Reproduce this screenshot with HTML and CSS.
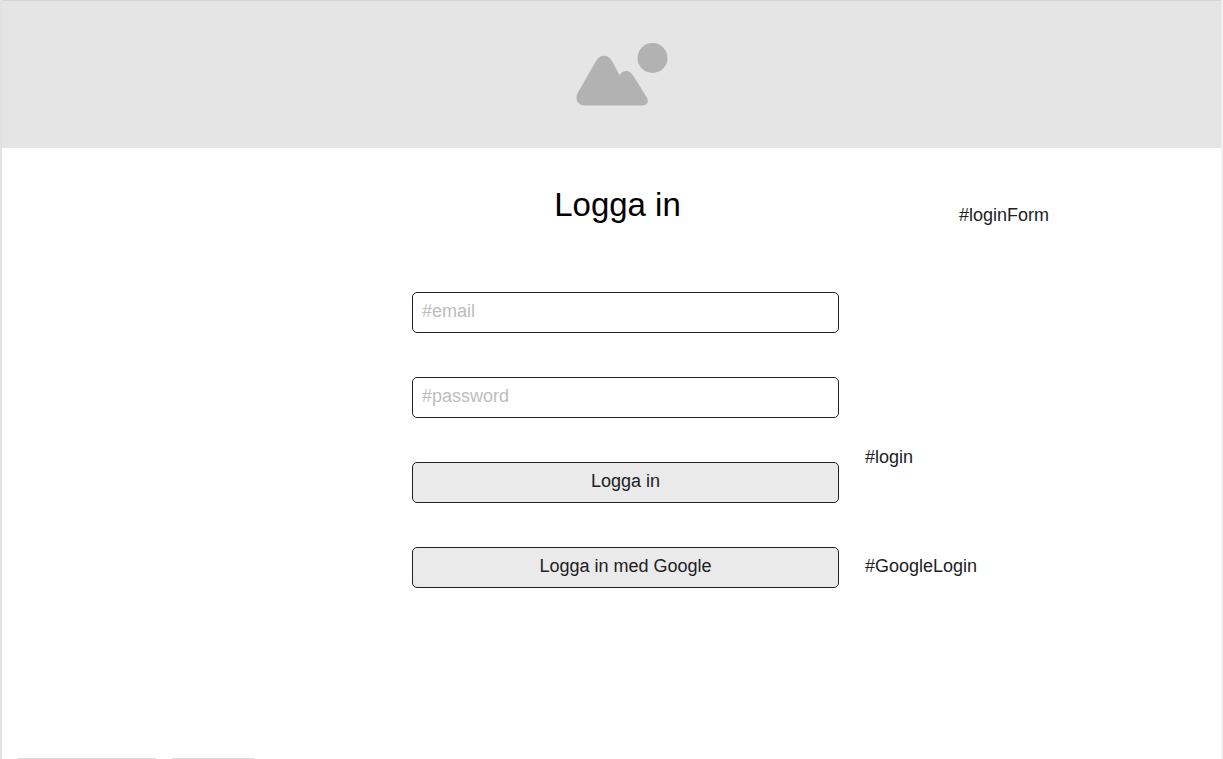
FILE: index.html
```html
<!DOCTYPE html>
<html lang="sv">
<head>
<meta charset="utf-8">
<meta name="viewport" content="width=device-width, initial-scale=1">
<title>Logga in</title>
<link rel="stylesheet" href="styles.css">
</head>
<body>
<div class="page">
  <header class="banner">
    <svg class="banner-image" viewBox="0 0 92 64" width="92" height="64" aria-hidden="true">
      <path d="M20 18C24 11 32 11 36 18L43.500 32C47.500 26.500 53.500 26.500 57.500 33L70.500 54C73.500 59 71 62.500 66 62.500H9.500C1 62.500-1.500 56 2 49.500Z"/>
      <circle cx="76.500" cy="15" r="15"/>
    </svg>
  </header>
  <main class="login">
    <h1 class="title">Logga in</h1>
    <p class="note note-form">#loginForm</p>
    <form class="form" id="loginForm">
      <input class="field" id="email" type="email" placeholder="#email" aria-label="#email">
      <input class="field" id="password" type="password" placeholder="#password" aria-label="#password">
      <button class="button" id="login" type="submit">Logga in</button>
      <button class="button" id="GoogleLogin" type="button">Logga in med Google</button>
    </form>
    <div class="notes">
      <p class="note">#login</p>
      <p class="note">#GoogleLogin</p>
    </div>
  </main>
  <footer class="tabs">
    <span class="tab tab-wide"></span>
    <span class="tab"></span>
  </footer>
</div>
</body>
</html>
```
FILE: styles.css
```css
* {
  box-sizing: border-box;
}

body {
  margin: 0;
  background: #fff;
  color: #202124;
  font: 18px/24px "Liberation Sans", Arial, sans-serif;
}

.page {
  display: flex;
  flex-direction: column;
  min-height: 100vh;
  border-left: 2px solid #e2e2e2;
  border-right: 2px solid #f0f0f0;
}

.banner {
  display: flex;
  justify-content: center;
  padding: 42px 0 41px 20px;
  border-top: 1px solid #d4d4d4;
  background: #e5e5e5;
}

.banner-image {
  fill: #b2b2b2;
}

.login {
  display: grid;
  grid-template-columns: 410fr 427fr 382fr;
  flex: 1;
  align-content: start;
  row-gap: 65px;
  padding-top: 35px;
}

.title {
  grid-column: 2;
  margin: 0;
  padding-right: 16px;
  color: #000;
  font-size: 33px;
  font-weight: 400;
  line-height: 44px;
  text-align: center;
}

.note {
  margin: 0;
}

.note-form {
  align-self: end;
  padding-left: 120px;
}

.form {
  display: grid;
  grid-column: 2;
  gap: 44px;
}

.field,
.button {
  width: 100%;
  height: 41px;
  margin: 0;
  padding: 0 9px 3px;
  border: 1px solid #202124;
  border-radius: 5px;
  background: #fff;
  color: inherit;
  font: inherit;
}

.field::placeholder {
  color: #bdbdbd;
  opacity: 1;
}

.button {
  background: #eaeaea;
}

.notes {
  display: flex;
  flex-direction: column;
  gap: 85px;
  align-self: end;
  padding: 0 0 10px 26px;
}

.tabs {
  display: flex;
  gap: 16px;
  padding-left: 16px;
}

.tab {
  width: 82px;
  height: 1px;
  background: #dcdcdc;
}

.tab-wide {
  width: 138px;
}
```
